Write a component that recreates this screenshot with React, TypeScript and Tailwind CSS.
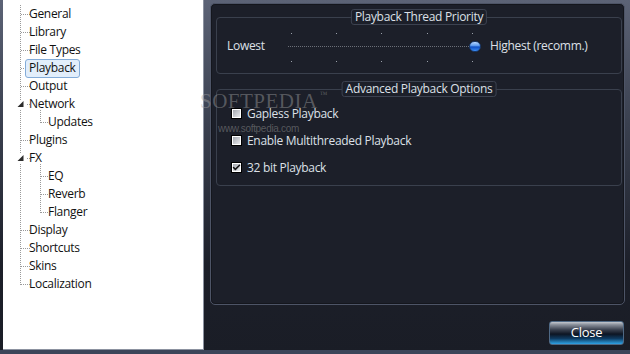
import { Check } from "lucide-react"

type TreeItem = {
  label: string
  level: 1 | 2
  selected?: boolean
}

const treeItems: TreeItem[] = [
  { label: "General", level: 1 },
  { label: "Library", level: 1 },
  { label: "File Types", level: 1 },
  { label: "Playback", level: 1, selected: true },
  { label: "Output", level: 1 },
  { label: "Network", level: 1 },
  { label: "Updates", level: 2 },
  { label: "Plugins", level: 1 },
  { label: "FX", level: 1 },
  { label: "EQ", level: 2 },
  { label: "Reverb", level: 2 },
  { label: "Flanger", level: 2 },
  { label: "Display", level: 1 },
  { label: "Shortcuts", level: 1 },
  { label: "Skins", level: 1 },
  { label: "Localization", level: 1 }
]

const expanded = ["Network", "FX"]

function TreeLines() {
  const rowY = (i: number) => 14 + i * 18 + 0.5

  return (
    <svg
      className="pointer-events-none absolute left-0 top-0"
      width="201"
      height="300"
      stroke="#9a9a9a"
      strokeDasharray="1 1"
      fill="none"
    >
      <line x1="17.5" y1="5" x2="17.5" y2="100" />
      <line x1="17.5" y1="110" x2="17.5" y2="154" />
      <line x1="17.5" y1="164" x2="17.5" y2="285" />
      <line x1="37.5" y1="110" x2="37.5" y2="123" />
      <line x1="37.5" y1="164" x2="37.5" y2="213" />

      {treeItems.map((item, i) => {
        if (item.level === 2) {
          return (
            <line
              key={item.label}
              x1="38"
              y1={rowY(i)}
              x2="46"
              y2={rowY(i)}
            />
          )
        }

        const start = expanded.includes(item.label) ? 24 : 18

        return (
          <line
            key={item.label}
            x1={start}
            y1={rowY(i)}
            x2="27"
            y2={rowY(i)}
          />
        )
      })}

      <polygon
        points="20.5,101 20.5,107 14.5,107"
        fill="#2b2b2b"
        stroke="none"
      />
      <polygon
        points="20.5,155 20.5,161 14.5,161"
        fill="#2b2b2b"
        stroke="none"
      />
    </svg>
  )
}

function SettingsTree() {
  return (
    <div className="relative ml-[3px] h-[350px] w-[201px] shrink-0 border-b border-r border-[#8c92a0] bg-white">
      <TreeLines />

      <div className="relative pt-[5px]">
        {treeItems.map((item) => (
          <div
            key={item.label}
            className={
              item.level === 1
                ? "flex h-[18px] items-center pl-[22px]"
                : "flex h-[18px] items-center pl-[41px]"
            }
          >
            <span
              className={
                item.selected
                  ? "flex h-[19px] items-center rounded-[3px] border border-[#84acd8] bg-[#e2eefb] px-[3px] text-[12px] text-[#111]"
                  : "flex h-[19px] items-center rounded-[3px] border border-transparent px-[3px] text-[12px] text-[#111]"
              }
            >
              {item.label}
            </span>
          </div>
        ))}
      </div>
    </div>
  )
}

function GroupTitle({ title }: { title: string }) {
  return (
    <div className="absolute -top-[9px] left-1/2 flex h-[16px] -translate-x-1/2 items-center whitespace-nowrap rounded-[3px] border border-[#3c4250] bg-[#1c1f29] px-[3px] text-[12px] text-[#dde0e7]">
      {title}
    </div>
  )
}

function PrioritySlider() {
  const ticks = [3, 48, 93, 139, 184]

  return (
    <div className="relative h-[55px] w-[194px] shrink-0">
      <svg
        className="absolute left-0 top-0"
        width="194"
        height="55"
      >
        <line
          x1="0"
          y1="28.5"
          x2="188"
          y2="28.5"
          stroke="#6b6f78"
          strokeDasharray="1 1"
        />
        {ticks.map((x) => (
          <g key={x} fill="#9aa0aa">
            <rect x={x} y="15" width="1" height="1" />
            <rect x={x} y="43" width="1" height="1" />
          </g>
        ))}
      </svg>

      <div className="absolute left-[181px] top-[23px] h-[11px] w-[12px] rounded-full border border-[#1a3c70] bg-[linear-gradient(to_bottom,#b9d8ff_0%,#5e9cf0_40%,#0f4fc4_55%,#3a8cf5_100%)]" />
    </div>
  )
}

function OptionCheckbox({
  label,
  checked
}: {
  label: string
  checked?: boolean
}) {
  return (
    <label className="flex h-[11px] items-center gap-[5px]">
      <span className="flex h-[11px] w-[11px] items-center justify-center border border-black bg-[linear-gradient(to_bottom_right,#9a9ea6,#f2f3f5)] shadow-[inset_0_0_0_1px_#ffffff]">
        {checked && (
          <Check
            size={9}
            strokeWidth={4}
            className="text-[#111]"
          />
        )}
      </span>

      <span className="text-[12px] text-[#dde0e7]">
        {label}
      </span>
    </label>
  )
}

function PlaybackPanel() {
  return (
    <div className="mt-[3px] h-[302px] w-[415px] rounded-[5px] border border-[#4d5466] bg-[#1c1f29] pt-[13px] shadow-[inset_0_0_0_1px_#14161d]">
      <div className="relative ml-[5px] h-[57px] w-[406px] rounded-[4px] border border-[#3a404d]">
        <GroupTitle title="Playback Thread Priority" />

        <div className="flex h-full items-center pl-[10px]">
          <span className="w-[61px] shrink-0 text-[12px] text-[#dde0e7]">
            Lowest
          </span>

          <PrioritySlider />

          <span className="ml-[8px] text-[12px] text-[#dde0e7]">
            Highest (recomm.)
          </span>
        </div>
      </div>

      <div className="relative ml-[5px] mt-[15px] h-[97px] w-[406px] rounded-[4px] border border-[#3a404d]">
        <GroupTitle title="Advanced Playback Options" />

        <div className="flex flex-col gap-[16px] pl-[14px] pt-[18px]">
          <OptionCheckbox label="Gapless Playback" />
          <OptionCheckbox label="Enable Multithreaded Playback" />
          <OptionCheckbox
            label="32 bit Playback"
            checked
          />
        </div>
      </div>
    </div>
  )
}

export default function App() {
  return (
    <div className="relative flex h-[354px] w-[630px] flex-col overflow-hidden bg-[linear-gradient(to_bottom,#5c6376_0%,#3a404f_35%,#1c1f29_75%,#1a1d26_100%)] font-['Open_Sans',sans-serif] tracking-[-0.3px]">
      <div className="flex h-[350px]">
        <SettingsTree />

        <div className="ml-[6px] flex flex-1 flex-col">
          <PlaybackPanel />

          <button
            type="button"
            className="ml-auto mr-[6px] mt-[16px] flex h-[24px] w-[75px] items-center justify-center rounded-[3px] border border-[#4f6985] bg-[linear-gradient(to_bottom,#c4c8cf_0%,#8a909b_12%,#3a414f_35%,#0d1523_55%,#0e3a60_75%,#2ea3e6_100%)] text-[13px] text-white"
          >
            Close
          </button>
        </div>
      </div>

      <div className="h-[4px] bg-[#3c4559]" />

      <div className="pointer-events-none absolute left-[200px] top-[91px] flex items-start font-['Liberation_Serif',serif] text-[21px] leading-none tracking-[0.5px] text-[#a0a0a0]/45">
        SOFTPEDIA
        <span className="ml-[2px] text-[8px]">™</span>
      </div>

      <div className="pointer-events-none absolute left-[218px] top-[124px] font-['Liberation_Sans_Narrow','Liberation_Sans',sans-serif] text-[10px] leading-none text-[#8a8a8a]/55">
        www.softpedia.com
      </div>
    </div>
  )
}
